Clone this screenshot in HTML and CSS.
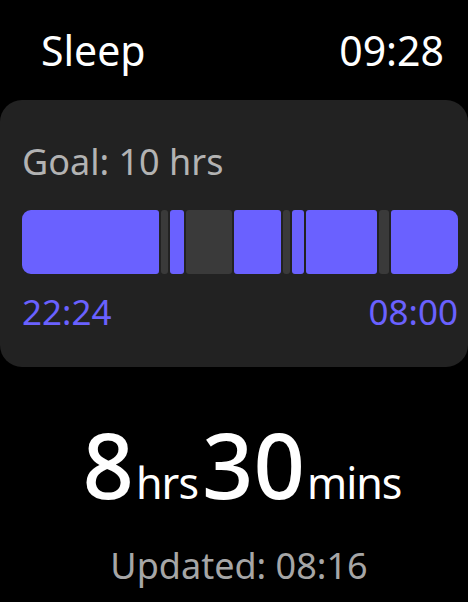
FILE: index.html
```html
<!DOCTYPE html>
<html lang="en">
<head>
  <meta charset="UTF-8" />
  <title>Sleep</title>
  <link rel="stylesheet" href="styles.css">
</head>
<body>

  <!-- HEADER -->
  <div class="header">
    <span class="title">Sleep</span>
    <span class="clock">09:28</span>
  </div>

  <!-- SLEEP CARD -->
  <div class="card">
    <p class="goal">Goal: 10 hrs</p>

    <div class="timeline">
      <div class="seg sleep" style="flex-grow: 138"></div>
      <div class="seg awake" style="flex-grow: 7"></div>
      <div class="seg sleep" style="flex-grow: 14"></div>
      <div class="seg awake" style="flex-grow: 46"></div>
      <div class="seg sleep" style="flex-grow: 48"></div>
      <div class="seg awake" style="flex-grow: 7"></div>
      <div class="seg sleep" style="flex-grow: 12"></div>
      <div class="seg sleep" style="flex-grow: 71"></div>
      <div class="seg awake" style="flex-grow: 10"></div>
      <div class="seg sleep" style="flex-grow: 68"></div>
    </div>

    <div class="times">
      <span>22:24</span>
      <span>08:00</span>
    </div>
  </div>

  <!-- TOTAL -->
  <div class="total">
    <span class="num">8</span><span class="unit">hrs</span><span class="num">30</span><span class="unit">mins</span>
  </div>

  <p class="updated">Updated: 08:16</p>

</body>
</html>
```

FILE: styles.css
```css
body {
  margin: 0;
  width: 468px;
  height: 602px;
  background-color: #000;
  color: #fff;
  font-family: "Noto Sans", "Open Sans", sans-serif;
  overflow: hidden;
}

/* Header */
.header {
  display: flex;
  justify-content: space-between;
  align-items: baseline;
  padding: 22px 24px 0 41px;
  height: 100px;
  box-sizing: border-box;
  font-size: 41px;
  line-height: 56px;
}

/* Card */
.card {
  background-color: #222;
  border-radius: 22px;
  height: 267px;
  box-sizing: border-box;
  padding: 37px 10px 0 22px;
}

.goal {
  margin: 0;
  font-size: 36px;
  line-height: 50px;
  color: #b3b3b3;
}

.timeline {
  display: flex;
  gap: 2px;
  height: 64px;
  margin-top: 23px;
}

.seg {
  flex-basis: 0;
  border-radius: 3px;
}

.seg.sleep { background-color: #6a61ff; }
.seg.awake { background-color: #3a3a3a; }

.seg:first-child { border-radius: 9px 3px 3px 9px; }
.seg:last-child  { border-radius: 3px 9px 9px 3px; }

.times {
  display: flex;
  justify-content: space-between;
  margin-top: 16px;
  font-size: 35px;
  line-height: 44px;
  color: #6a61ff;
}

/* Total */
.total {
  display: flex;
  justify-content: center;
  align-items: baseline;
  margin-top: 47px;
  padding-left: 20px;
  line-height: 100px;
}

.total .num {
  font-size: 90px;
  font-weight: 500;
}

.total .unit {
  font-size: 43px;
  letter-spacing: -1px;
  margin: 0 4px 0 2px;
}

.updated {
  margin: 9px 0 0;
  padding-left: 10px;
  text-align: center;
  font-size: 36px;
  line-height: 48px;
  color: #a6a6a6;
}
```
